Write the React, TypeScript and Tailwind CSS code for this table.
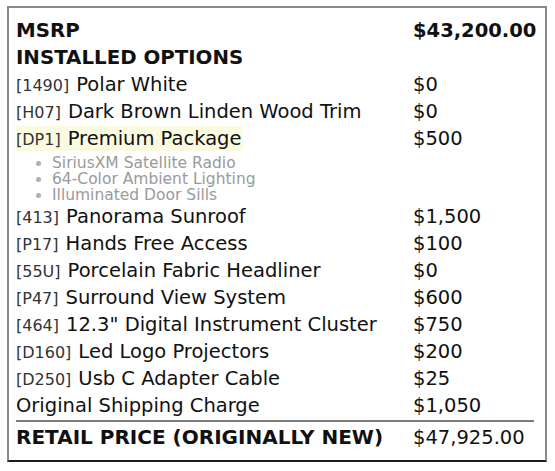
type Option = {
  code?: string;
  name: string;
  price: string;
  highlight?: boolean;
  features?: string[];
};

const options: Option[] = [
  { code: "1490", name: "Polar White", price: "$0" },
  { code: "H07", name: "Dark Brown Linden Wood Trim", price: "$0" },
  {
    code: "DP1",
    name: "Premium Package",
    price: "$500",
    highlight: true,
    features: [
      "SiriusXM Satellite Radio",
      "64-Color Ambient Lighting",
      "Illuminated Door Sills",
    ],
  },
  { code: "413", name: "Panorama Sunroof", price: "$1,500" },
  { code: "P17", name: "Hands Free Access", price: "$100" },
  { code: "55U", name: "Porcelain Fabric Headliner", price: "$0" },
  { code: "P47", name: "Surround View System", price: "$600" },
  { code: "464", name: '12.3" Digital Instrument Cluster', price: "$750" },
  { code: "D160", name: "Led Logo Projectors", price: "$200" },
  { code: "D250", name: "Usb C Adapter Cable", price: "$25" },
  { name: "Original Shipping Charge", price: "$1,050" },
];

export default function App() {
  return (
    <div className="w-[555px] h-[471px] bg-white pt-[6px] pl-[7px] font-['DejaVu_Sans',sans-serif] text-[#111]">
      <div className="w-[540px] h-[456px] border-2 border-[#8a8a8a] border-b-[#1a1a1a] pl-[7px] pr-[10px] pt-[9px]">
        <div className="grid grid-cols-[397px_1fr] text-[19.5px]">
          <div className="h-[27px] leading-[27px] text-[19.8px] font-bold">MSRP</div>
          <div className="h-[27px] leading-[27px] font-bold">$43,200.00</div>
          <div className="h-[27px] leading-[27px] text-[19.8px] font-bold col-span-2">
            INSTALLED OPTIONS
          </div>

          {options.map((opt, idx) => (
            <div key={idx} className="contents">
              <div className="h-[27px] flex items-center">
                <div
                  className={`h-[25px] flex items-baseline pr-[2px] leading-[25px] ${
                    opt.highlight ? "bg-[#fbfbe2]" : ""
                  }`}
                >
                  {opt.code && (
                    <span className="text-[16px] text-[#333] mr-[7px]">
                      [{opt.code}]
                    </span>
                  )}
                  <span>{opt.name}</span>
                </div>
              </div>
              <div className="h-[27px] leading-[27px]">{opt.price}</div>
              {opt.features && (
                <ul className="col-span-2 list-disc pl-[36px] pt-[3px] text-[15.5px] leading-[16px] text-[#9a9a9a] marker:text-[#b0b0b0]">
                  {opt.features.map((f, i) => (
                    <li key={i} className="h-[16px]">
                      {f}
                    </li>
                  ))}
                </ul>
              )}
            </div>
          ))}

          <div className="col-span-2 mt-[1px] border-t-2 border-[#7a7a7a] mr-[2px]"></div>
          <div className="h-[27px] leading-[27px] mt-[2px] text-[20px] font-bold">
            RETAIL PRICE (ORIGINALLY NEW)
          </div>
          <div className="h-[27px] leading-[27px] mt-[2px]">$47,925.00</div>
        </div>
      </div>
    </div>
  );
}
